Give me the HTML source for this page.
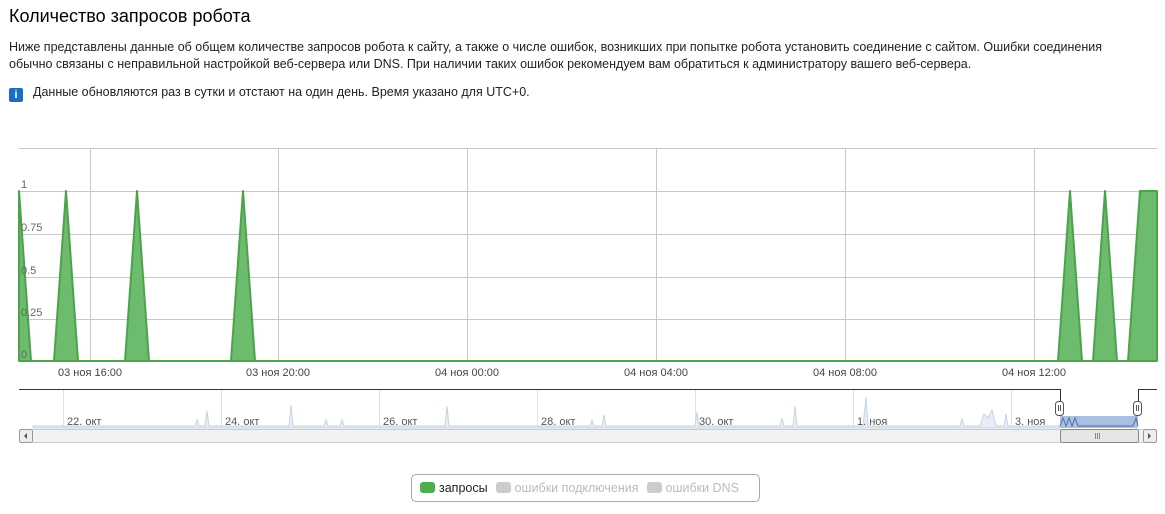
<!DOCTYPE html>
<html><head><meta charset="utf-8"><style>
body{margin:0;width:1165px;height:514px;background:#fff;font-family:"Liberation Sans",Arial,sans-serif;color:#222;position:relative;overflow:hidden}
h1{position:absolute;left:9px;top:6px;margin:0;font-size:18px;font-weight:normal;color:#000}
.p{position:absolute;left:9px;top:39px;font-size:12.5px;line-height:17px;width:1135px;color:#222}
.info{position:absolute;left:9px;top:85px;font-size:12.5px}
.ic{display:inline-block;width:14px;height:14px;background:#1a6fc4;color:#fff;font-weight:bold;font-size:11px;text-align:center;line-height:14px;border-radius:2px;margin-right:10px;vertical-align:-2px}
svg{position:absolute;left:0;top:0}
.leg{position:absolute;left:411px;top:474px;width:347px;height:26px;border:1px solid #aaa;border-radius:5px;font-size:12.5px;line-height:26px;white-space:nowrap}
.sw{display:inline-block;width:15px;height:11px;border-radius:3px;vertical-align:-1px;margin:0 4px 0 8px}
</style></head><body>
<h1>Количество запросов робота</h1>
<div class="p">Ниже представлены данные об общем количестве запросов робота к сайту, а также о числе ошибок, возникших при попытке робота установить соединение с сайтом. Ошибки соединения обычно связаны с неправильной настройкой веб-сервера или DNS. При наличии таких ошибок рекомендуем вам обратиться к администратору вашего веб-сервера.</div>
<div class="info"><span class="ic">i</span>Данные обновляются раз в сутки и отстают на один день. Время указано для UTC+0.</div>
<svg width="1165" height="514" font-family="Liberation Sans,Arial,sans-serif">
<g stroke="#c8c8c8" stroke-width="1">
<line x1="19" y1="148.5" x2="1157" y2="148.5"/>
<line x1="19" y1="191.5" x2="1157" y2="191.5"/>
<line x1="19" y1="234.5" x2="1157" y2="234.5"/>
<line x1="19" y1="277.5" x2="1157" y2="277.5"/>
<line x1="19" y1="319.5" x2="1157" y2="319.5"/>
<line x1="90.5" y1="148" x2="90.5" y2="361"/>
<line x1="278.5" y1="148" x2="278.5" y2="361"/>
<line x1="467.5" y1="148" x2="467.5" y2="361"/>
<line x1="656.5" y1="148" x2="656.5" y2="361"/>
<line x1="845.5" y1="148" x2="845.5" y2="361"/>
<line x1="1034.5" y1="148" x2="1034.5" y2="361"/>
</g>
<path d="M19 191 L31 361 L54 361 L66 191 L78 361 L125 361 L137 191 L149 361 L231 361 L243 191 L255 361 L1058 361 L1070 191 L1082 361 L1093 361 L1105 191 L1117 361 L1128 361 L1140 191 L1157 191 L1157 361 L19 361 Z" fill="#6dbb6d" stroke="#4ca34c" stroke-width="2" stroke-linejoin="round"/>
<g font-size="11" fill="#666">
<text x="21" y="188">1</text><text x="21" y="231">0.75</text><text x="21" y="274">0.5</text><text x="21" y="316">0.25</text><text x="21" y="358">0</text>
</g>
<g font-size="11" fill="#444" text-anchor="middle">
<text x="90" y="376">03 ноя 16:00</text><text x="278" y="376">03 ноя 20:00</text><text x="467" y="376">04 ноя 00:00</text><text x="656" y="376">04 ноя 04:00</text><text x="845" y="376">04 ноя 08:00</text><text x="1034" y="376">04 ноя 12:00</text>
</g>
<path d="M19 389.5 H1060.5 V404 M1138.5 404 V389.5 H1157" fill="none" stroke="#333"/>
<g stroke="#e0e0e0"><line x1="63.5" y1="390" x2="63.5" y2="428"/><line x1="221.5" y1="390" x2="221.5" y2="428"/><line x1="379.5" y1="390" x2="379.5" y2="428"/><line x1="537.5" y1="390" x2="537.5" y2="428"/><line x1="695.5" y1="390" x2="695.5" y2="428"/><line x1="853.5" y1="390" x2="853.5" y2="428"/><line x1="1011.5" y1="390" x2="1011.5" y2="428"/></g>
<path d="M33 426 H195 L197 420 L199 426 L205 426 L207 411 L209 426 H289 L291 405 L293 426 H324 L326 420 L328 426 L340 426 L342 420 L344 426 H445 L447 406 L449 426 H590 L592 420 L594 426 L602 426 L604 415 L606 426 H695 L697 412 L699 426 H780 L782 418 L784 426 L793 426 L795 406 L797 426 H863 L866 397 L868 426 H960 L962 419 L964 426 L980 426 L984 414 L988 418 L992 410 L996 426 L1004 426 L1006 414 L1008 426 H1060 V428 H33 Z" fill="#e8eef7" stroke="#c6d3e6" stroke-width="1"/>
<rect x="1060" y="416" width="78" height="12" fill="#a9c0e0"/>
<path d="M1060 426 L1063 418 L1066 426 L1069 418 L1072 426 L1075 418 L1078 426 H1133 L1136 418 L1138 426" fill="none" stroke="#4a6fa8"/>
<g font-size="11" fill="#555"><text x="67" y="425">22. окт</text><text x="225" y="425">24. окт</text><text x="383" y="425">26. окт</text><text x="541" y="425">28. окт</text><text x="699" y="425">30. окт</text><text x="857" y="425">1. ноя</text><text x="1015" y="425">3. ноя</text></g>
<rect x="1055.5" y="401.5" width="8" height="14" rx="3" fill="#fff" stroke="#555"/><path d="M1058.5 405v6M1060.5 405v6" stroke="#555"/>
<rect x="1133.5" y="401.5" width="8" height="14" rx="3" fill="#fff" stroke="#555"/><path d="M1136.5 405v6M1138.5 405v6" stroke="#555"/>
<rect x="19.5" y="429.5" width="1137" height="13" fill="#f2f2f2" stroke="#ccc"/>
<rect x="19.5" y="429.5" width="13" height="13" rx="2" fill="#eee" stroke="#999"/><path d="M27 433v6l-3-3z" fill="#555"/>
<rect x="1143.5" y="429.5" width="13" height="13" rx="2" fill="#eee" stroke="#999"/><path d="M1148 433v6l3-3z" fill="#555"/>
<rect x="1060.5" y="429.5" width="78" height="13" rx="2" fill="#e6e6e6" stroke="#888"/><path d="M1095.5 433v6M1097.5 433v6M1099.5 433v6" stroke="#888"/>
</svg>
<div class="leg"><span class="sw" style="background:#4cae4c"></span><span style="color:#222">запросы</span><span class="sw" style="background:#ccc"></span><span style="color:#bbb">ошибки подключения</span><span class="sw" style="background:#ccc"></span><span style="color:#bbb">ошибки DNS</span></div>
</body></html>
